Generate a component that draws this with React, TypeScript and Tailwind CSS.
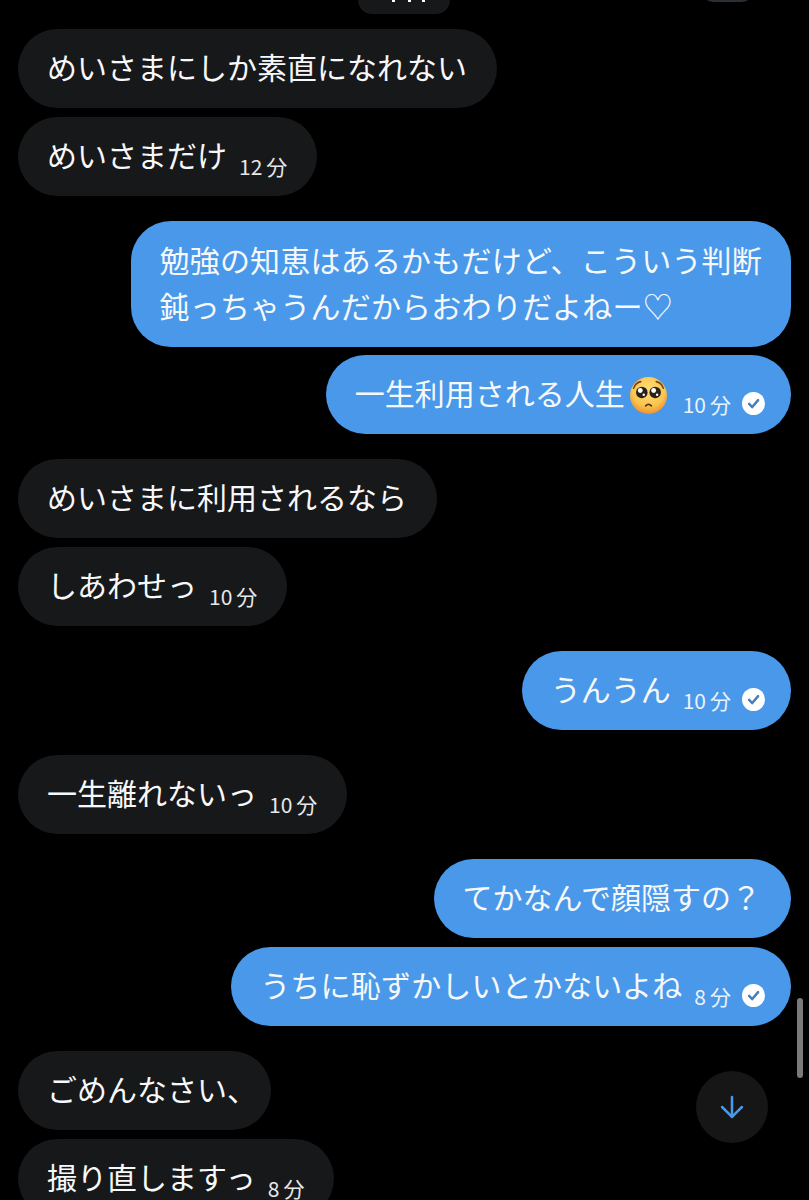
import type { ReactNode } from 'react';
import { ArrowDown } from 'lucide-react';

function ReadCheck() {
  return (
    <svg width="23" height="23" viewBox="0 0 22 22" className="shrink-0">
      <circle cx="11" cy="11" r="11" fill="#fff" />
      <path d="M6.8 11.4 L9.8 14.4 L15.4 7.8" fill="none" stroke="#4a7fb8" strokeWidth="2.4" strokeLinecap="round" strokeLinejoin="round" />
    </svg>
  );
}

function PleadingFace() {
  return (
    <svg width="37" height="37" viewBox="0 0 36 36" className="ml-[5px] mr-[4px] shrink-0 translate-y-[4px]">
      <defs>
        <radialGradient id="face" cx="50%" cy="35%" r="68%">
          <stop offset="0%" stopColor="#ffe07a" />
          <stop offset="65%" stopColor="#fbc44e" />
          <stop offset="100%" stopColor="#e98c30" />
        </radialGradient>
      </defs>
      <circle cx="18" cy="18" r="18" fill="url(#face)" />
      <path d="M3.5 11 Q5.5 5.5 10.5 4.5" fill="none" stroke="#7d4415" strokeWidth="1.5" strokeLinecap="round" />
      <path d="M32.5 11 Q30.5 5.5 25.5 4.5" fill="none" stroke="#7d4415" strokeWidth="1.5" strokeLinecap="round" />
      <circle cx="11.5" cy="15" r="5.6" fill="#2c2016" />
      <circle cx="24.5" cy="15" r="5.6" fill="#2c2016" />
      <circle cx="10" cy="13.2" r="2.4" fill="#fff" />
      <circle cx="23" cy="13.2" r="2.4" fill="#fff" />
      <circle cx="13.4" cy="17.2" r="1.2" fill="#fff" />
      <circle cx="26.4" cy="17.2" r="1.2" fill="#fff" />
      <path d="M15.2 28 Q18 25.2 20.8 28" fill="none" stroke="#5b3110" strokeWidth="1.7" strokeLinecap="round" />
    </svg>
  );
}

function Bubble({ mine, mins, read, tight, children }: { mine?: boolean; mins?: number; read?: boolean; tight?: boolean; children: ReactNode }) {
  const rightPad = tight ? 'pr-[14px]' : read ? 'pr-[26px]' : 'pr-[30px]';
  return (
    <div className={`flex ${mine ? 'justify-end' : 'justify-start'}`}>
      <div className={`flex h-[79px] items-center rounded-[40px] pl-[29px] text-[30px] leading-[46px] text-[#f7f8fa] ${rightPad} ${mine ? 'bg-[#4a98e9]' : 'bg-[#17181a]'}`}>
        <span className="mb-[6px] flex items-center whitespace-nowrap">{children}</span>
        {mins !== undefined && (
          <span className={`ml-[12px] mt-[18px] flex gap-[4px] whitespace-nowrap text-[21px] leading-[24px] ${mine ? 'text-[#eaf3fd]' : 'text-[#e8e8e8]'}`}>
            <span>{mins}</span>
            <span>分</span>
          </span>
        )}
        {read && (
          <span className="ml-[11px] mt-[18px]">
            <ReadCheck />
          </span>
        )}
      </div>
    </div>
  );
}

export default function App() {
  return (
    <div
      className="relative h-[1200px] w-[809px] overflow-hidden bg-black"
      style={{ fontFamily: '"Noto Sans CJK JP", "Noto Sans", sans-serif' }}
    >
      <div className="flex flex-col px-[18px]">
        {/* messages cut off by the top edge */}
        <div className="flex h-[14px] justify-between pl-[340px] pr-[36px]">
          <div className="relative -mt-[20px] h-[34px] w-[92px] rounded-[14px] bg-[#17181a]">
            <div className="absolute left-[34px] top-[20px] h-[2px] w-[3px] bg-white" />
            <div className="absolute left-[50px] top-[20px] h-[2px] w-[3px] bg-white" />
            <div className="absolute left-[64px] top-[20px] h-[2px] w-[3px] bg-white" />
          </div>
          <div className="-mt-[32px] h-[34px] w-[55px] rounded-[14px] bg-[#2a2f36]" />
        </div>

        <div className="mt-[15px] flex flex-col gap-[9px]">
          <Bubble>めいさまにしか素直になれない</Bubble>
          <Bubble mins={12}>めいさまだけ</Bubble>
        </div>

        <div className="mt-[25px] flex flex-col gap-[8px]">
          <div className="flex justify-end">
            <div className="rounded-[40px] bg-[#4a98e9] pb-[19px] pl-[29px] pr-[29px] pt-[15px] text-[30px] leading-[46px] tracking-[0.2px] text-[#f7f8fa]">
              <div className="whitespace-nowrap">勉強の知恵はあるかもだけど、こういう判断</div>
              <div className="whitespace-nowrap">鈍っちゃうんだからおわりだよねー♡</div>
            </div>
          </div>
          <Bubble mine mins={10} read>
            一生利用される人生
            <PleadingFace />
          </Bubble>
        </div>

        <div className="mt-[25px] flex flex-col gap-[9px]">
          <Bubble>めいさまに利用されるなら</Bubble>
          <Bubble mins={10}>しあわせっ</Bubble>
        </div>

        <div className="mt-[25px]">
          <Bubble mine mins={10} read>うんうん</Bubble>
        </div>

        <div className="mt-[25px]">
          <Bubble mins={10}>一生離れないっ</Bubble>
        </div>

        <div className="mt-[25px] flex flex-col gap-[9px]">
          <Bubble mine>てかなんで顔隠すの？</Bubble>
          <Bubble mine mins={8} read>
            <span className="tracking-[0.2px]">うちに恥ずかしいとかないよね</span>
          </Bubble>
        </div>

        <div className="mt-[25px] flex flex-col gap-[9px]">
          <Bubble tight>ごめんなさい、</Bubble>
          <Bubble mins={8}>撮り直しますっ</Bubble>
        </div>
      </div>

      {/* scrollbar */}
      <div className="absolute left-[797px] top-[998px] h-[80px] w-[6px] rounded-full bg-[#7a7a7a]" />

      {/* jump to latest */}
      <div className="absolute left-[696px] top-[1071px] flex h-[72px] w-[72px] items-center justify-center rounded-full bg-[#161616]">
        <ArrowDown size={34} strokeWidth={1.8} className="text-[#4a98e9]" />
      </div>
    </div>
  );
}
